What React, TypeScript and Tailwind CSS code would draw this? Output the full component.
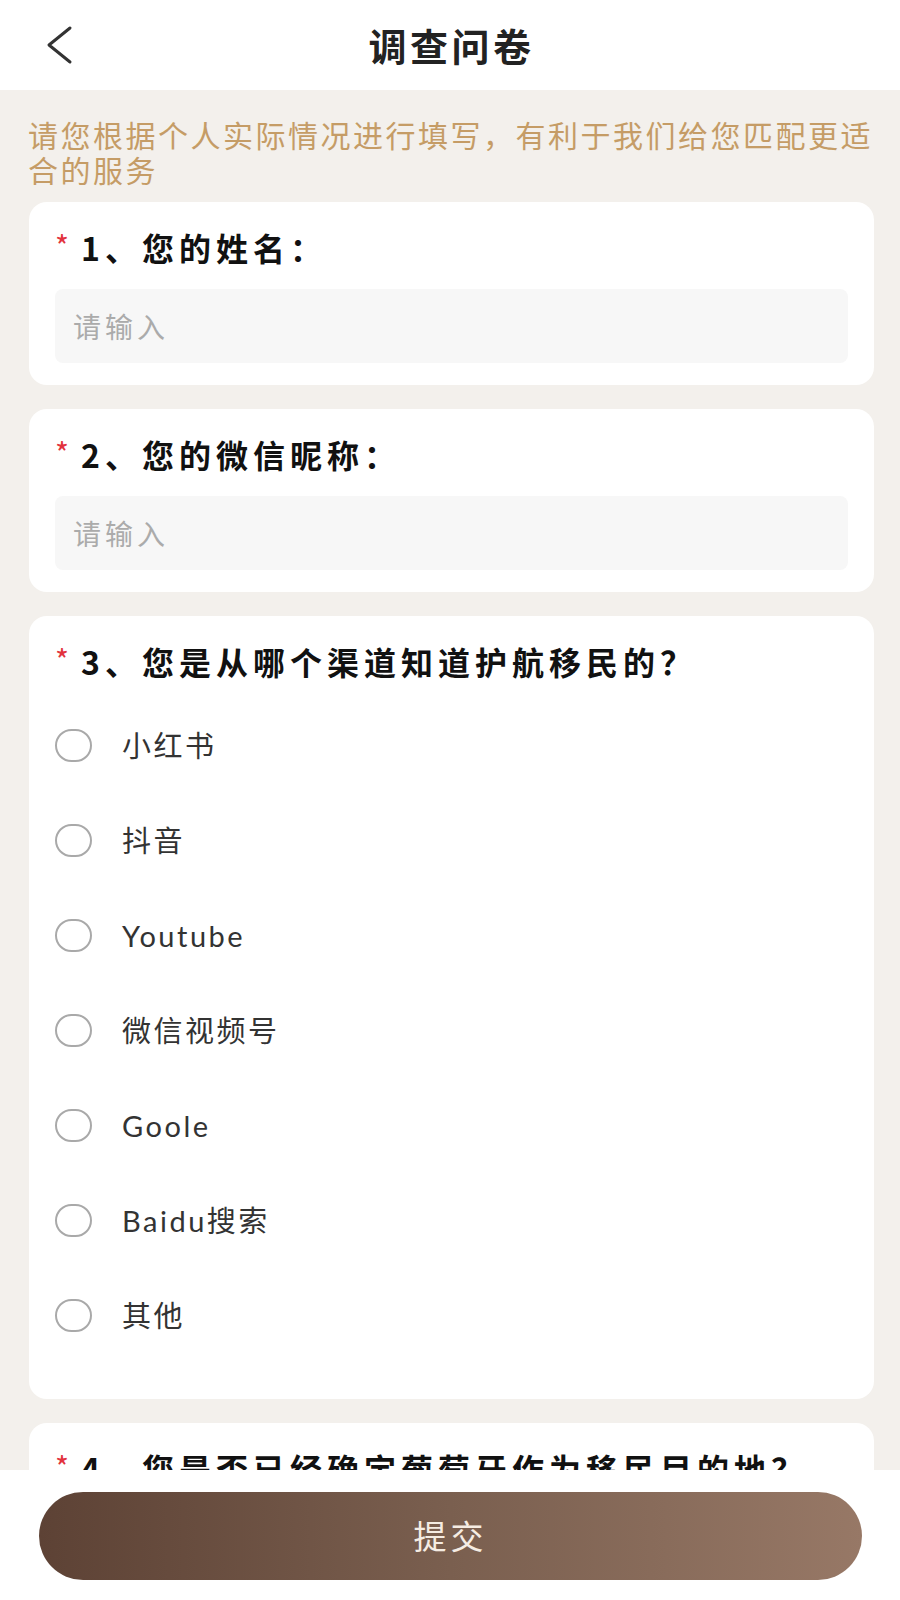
import React, { useState } from "react";

interface Question {
  id: number;
  title: string;
  type: "input" | "radio";
  options?: string[];
}

const questions: Question[] = [
  { id: 1, title: "1、您的姓名：", type: "input" },
  { id: 2, title: "2、您的微信昵称：", type: "input" },
  {
    id: 3,
    title: "3、您是从哪个渠道知道护航移民的？",
    type: "radio",
    options: ["小红书", "抖音", "Youtube", "微信视频号", "Goole", "Baidu搜索", "其他"],
  },
  {
    id: 4,
    title: "4、您是否已经确定葡萄牙作为移民目的地？",
    type: "radio",
    options: ["已经确定", "还在考虑"],
  },
];

const FONT = { fontFamily: '"Noto Sans CJK SC", "Noto Sans", sans-serif' };
const OPTION_FONT = { fontFamily: 'Lato, "Noto Sans CJK SC", sans-serif' };

const App: React.FC = () => {
  const [answers, setAnswers] = useState<Record<number, string>>({});

  const pick = (qid: number, value: string) => {
    setAnswers((prev) => ({ ...prev, [qid]: value }));
  };

  return (
    <div className="w-[900px] h-[1600px] flex flex-col bg-[#f3f0ec] overflow-hidden" style={FONT}>
      {/* header */}
      <header className="h-[90px] shrink-0 bg-white grid grid-cols-[1fr_auto_1fr] items-center">
        <button className="pl-[46px] w-fit h-full flex items-center">
          <svg width="28" height="40" viewBox="0 0 28 40" fill="none">
            <polyline
              points="24,3 3,20 24,37"
              stroke="#333"
              strokeWidth="3"
              strokeLinecap="round"
              strokeLinejoin="round"
            />
          </svg>
        </button>
        <h1 className="text-[38px] font-bold tracking-[3.5px] text-[#222] leading-none pl-[3px]">调查问卷</h1>
        <div />
      </header>

      {/* content */}
      <main className="flex-1 overflow-hidden">
        <p className="pl-[28px] pr-[18px] pt-[27px] text-[30px] leading-[35px] tracking-[2.5px] text-[#c59c66]">
          请您根据个人实际情况进行填写，有利于我们给您匹配更适合的服务
        </p>

        <div className="flex flex-col gap-[24px] pl-[29px] pr-[26px] mt-[15px]">
          {questions.map((q) => (
            <section key={q.id} className="bg-white rounded-[18px] px-[26px] pt-[28px] pb-[22px]">
              <h3 className="flex items-center h-[34px] text-[32px] font-bold tracking-[5px] text-[#111] whitespace-nowrap">
                <span className="w-[26px] text-[30px] text-[#e2333d] font-normal -mt-[4px] tracking-normal">*</span>
                {q.title}
              </h3>

              {q.type === "input" ? (
                <input
                  placeholder="请输入"
                  className="mt-[25px] w-full h-[74px] rounded-[8px] bg-[#f7f7f7] px-[18px] text-[28px] tracking-[4px] text-[#333] placeholder:text-[#ababab] outline-none"
                />
              ) : (
                <ul className="mt-[20px] pb-[14px]">
                  {q.options?.map((opt) => (
                    <li
                      key={opt}
                      onClick={() => pick(q.id, opt)}
                      className="h-[95px] flex items-center cursor-pointer"
                    >
                      <span
                        className={
                          answers[q.id] === opt
                            ? "w-[37px] h-[33px] rounded-full border-[9px] border-[#6b4f3f]"
                            : "w-[37px] h-[33px] rounded-full border-2 border-[#a9a9a9]"
                        }
                      />
                      <span className="ml-[30px] text-[29px] tracking-[2.5px] text-[#333]" style={OPTION_FONT}>
                        {opt}
                      </span>
                    </li>
                  ))}
                </ul>
              )}
            </section>
          ))}
        </div>
      </main>

      {/* submit bar */}
      <footer className="h-[130px] shrink-0 bg-white pt-[22px] pl-[39px] pr-[38px]">
        <button className="w-full h-[88px] rounded-full bg-gradient-to-r from-[#5d4235] via-[#7a5f4f] to-[#977866] text-[#f5ece3] text-[33px] tracking-[4px]">
          提交
        </button>
      </footer>
    </div>
  );
};

export default App;
